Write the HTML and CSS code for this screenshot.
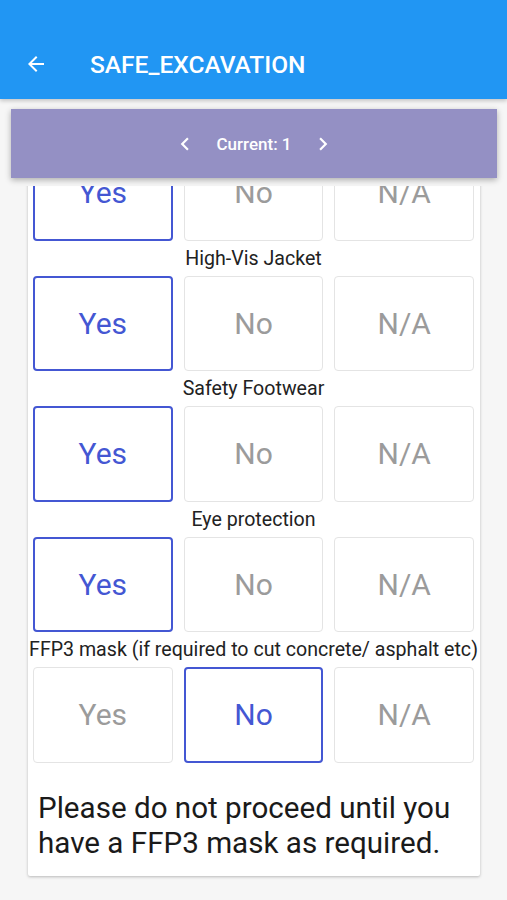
FILE: index.html
```html
<!DOCTYPE html>
<html lang="en">
<head>
    <meta charset="UTF-8">
    <meta name="viewport" content="width=device-width, initial-scale=1.0">
    <title>SAFE_EXCAVATION</title>
    <link rel="stylesheet" href="styles.css">
</head>
<body>

    <!-- Barra superior -->
    <header class="toolbar">
        <svg class="back" width="24" height="24" viewBox="0 0 24 24">
            <path d="M20 11H7.83l5.59-5.59L12 4l-8 8 8 8 1.41-1.41L7.83 13H20v-2z" fill="#fff"/>
        </svg>
        <h1 class="title">SAFE_EXCAVATION</h1>
    </header>

    <!-- Navegação entre registos -->
    <div class="pager">
        <svg width="26" height="26" viewBox="0 0 24 24">
            <path d="M15.41 7.41 14 6l-6 6 6 6 1.41-1.41L10.83 12z" fill="#fff"/>
        </svg>
        <span class="current">Current: 1</span>
        <svg width="26" height="26" viewBox="0 0 24 24">
            <path d="M10 6 8.59 7.41 13.17 12l-4.58 4.59L10 18l6-6z" fill="#fff"/>
        </svg>
    </div>

    <!-- Área com scroll (a primeira linha já está meio escondida) -->
    <div class="scroll">
        <div class="card">
            <div class="options">
                <div class="opt selected">Yes</div>
                <div class="opt">No</div>
                <div class="opt">N/A</div>
            </div>

            <div class="question">High-Vis Jacket</div>
            <div class="options">
                <div class="opt selected">Yes</div>
                <div class="opt">No</div>
                <div class="opt">N/A</div>
            </div>

            <div class="question">Safety Footwear</div>
            <div class="options">
                <div class="opt selected">Yes</div>
                <div class="opt">No</div>
                <div class="opt">N/A</div>
            </div>

            <div class="question">Eye protection</div>
            <div class="options">
                <div class="opt selected">Yes</div>
                <div class="opt">No</div>
                <div class="opt">N/A</div>
            </div>

            <div class="question">FFP3 mask (if required to cut concrete/ asphalt etc)</div>
            <div class="options">
                <div class="opt">Yes</div>
                <div class="opt selected">No</div>
                <div class="opt">N/A</div>
            </div>

            <p class="warning">Please do not proceed until you have a FFP3 mask as required.</p>
        </div>
    </div>

</body>
</html>
```

FILE: styles.css
```css
* {
    box-sizing: border-box;
    margin: 0;
    padding: 0;
}

body {
    width: 507px;
    height: 900px;
    overflow: hidden;
    background-color: #f6f6f6;
    font-family: Roboto, "Noto Sans", sans-serif;
    display: flex;
    flex-direction: column;
}

/* Barra azul do topo */
.toolbar {
    height: 99px;
    flex-shrink: 0;
    background-color: #2196f3;
    display: flex;
    align-items: flex-end;
    padding: 0 0 20px 24px;
    color: #fff;
    box-shadow: 0 2px 4px rgba(0, 0, 0, 0.2);
    position: relative;
    z-index: 2;
}

.back {
    margin-bottom: 3px;
}

.title {
    font-size: 24.5px;
    font-weight: 500;
    margin-left: 42px;
    line-height: 28px;
}

/* Barra roxa com paginação */
.pager {
    margin: 10px 10px 0 11px;
    height: 69px;
    flex-shrink: 0;
    background-color: #9490c4;
    box-shadow: 0 2px 6px rgba(0, 0, 0, 0.3);
    display: flex;
    justify-content: center;
    align-items: center;
    gap: 18px;
    color: #fff;
    position: relative;
    z-index: 1;
}

.current {
    font-size: 17px;
    font-weight: 500;
}

.scroll {
    flex: 1;
    margin-top: 8px;
    overflow: hidden;
}

.card {
    margin: -41px 0 0 28px;
    width: 452px;
    background-color: #fff;
    padding: 0 6px 15px 5px;
    border-radius: 2px;
    box-shadow: 0 1px 3px rgba(0, 0, 0, 0.25);
}

.question {
    height: 35px;
    display: flex;
    align-items: center;
    justify-content: center;
    font-size: 19.6px;
    color: #222;
    white-space: nowrap;
}

.options {
    display: grid;
    grid-template-columns: 1fr 1fr 1fr;
    column-gap: 11px;
    height: 95.5px;
}

.opt {
    border: 1px solid #e4e4e4;
    border-radius: 4px;
    display: flex;
    align-items: center;
    justify-content: center;
    font-size: 30px;
    color: #9b9b9b;
}

.opt.selected {
    border: 2px solid #4457d3;
    color: #4457d3;
}

.warning {
    margin-top: 28px;
    padding: 0 10px 0 5px;
    font-size: 29.6px;
    line-height: 35px;
    color: #1a1a1a;
}
```
